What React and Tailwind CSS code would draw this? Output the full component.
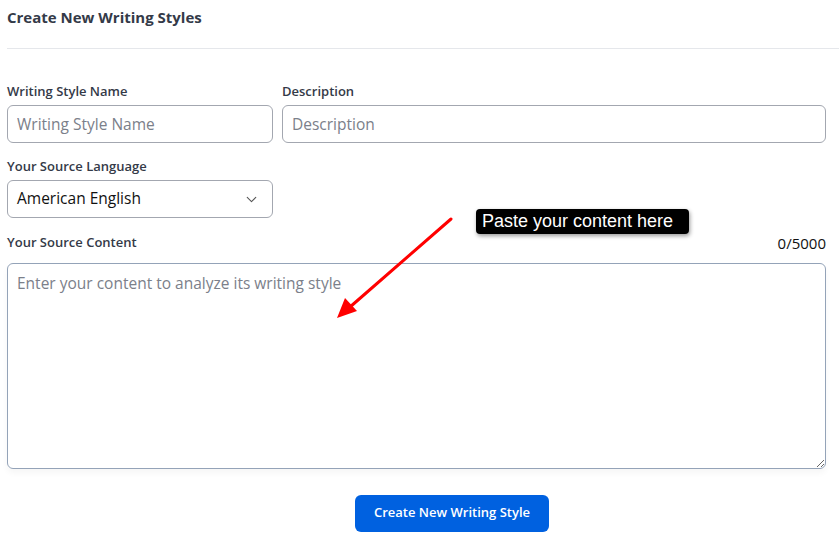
import { ChevronDown } from "lucide-react";

// Writing style creation form with a "paste here" callout.

function Label({ children }) {
  return <p className="text-[13px] font-semibold leading-[18px] text-[#343a48]">{children}</p>;
}

export default function App() {
  return (
    <div className="relative min-h-[542px] w-[839px] bg-white font-['Open_Sans','Noto_Sans',sans-serif] text-[#343a48]">
      <div className="pl-[7px] pt-[7px]">
        <h1 className="text-[15px] font-bold leading-[21px]">Create New Writing Styles</h1>
      </div>
      <div className="ml-[7px] mt-[20px] border-t border-[#e5e7eb]" />

      <div className="pl-[7px] pr-[13px] pt-[33px]">
        <div className="flex gap-[9px]">
          <div className="w-[266px]">
            <Label>Writing Style Name</Label>
            <input
              className="mt-[5px] h-[38px] w-full rounded-md border border-[#a3a7b0] px-[9px] text-[15.5px] text-[#222] outline-none placeholder:text-[#7b808a]"
              placeholder="Writing Style Name"
            />
          </div>
          <div className="flex-1">
            <Label>Description</Label>
            <input
              className="mt-[5px] h-[38px] w-full rounded-md border border-[#a3a7b0] px-[9px] text-[15.5px] text-[#222] outline-none placeholder:text-[#7b808a]"
              placeholder="Description"
            />
          </div>
        </div>

        <div className="mt-[14px] w-[266px]">
          <Label>Your Source Language</Label>
          <div className="mt-[5px] flex h-[38px] w-full items-center justify-between rounded-md border border-[#a3a7b0] pl-[9px] pr-[12px] text-[15.5px] text-[#111]">
            <span>American English</span>
            <ChevronDown size={17} strokeWidth={1.5} className="text-[#555]" />
          </div>
        </div>

        <div className="mt-[14px] flex items-end justify-between">
          <Label>Your Source Content</Label>
          <span className="mb-[-4px] text-[15px] text-[#111]">0/5000</span>
        </div>
        <div className="mt-[12px] rounded-md shadow-[0_4px_6px_rgba(0,0,0,0.04)]">
          <textarea
            className="block h-[206px] w-full resize-y rounded-md border border-[#94a3b8] px-[9px] py-[8px] text-[15.5px] leading-[22px] outline-none placeholder:text-[#7b808a] caret-black"
            placeholder="Enter your content to analyze its writing style"
          />
        </div>

        <div className="mt-[26px] flex justify-center pl-[71px]">
          <button className="h-[37px] w-[194px] rounded-md bg-[#0061e0] text-[13px] font-semibold text-white">
            Create New Writing Style
          </button>
        </div>
      </div>

      {/* callout */}
      <div className="absolute left-[476px] top-[209px] flex h-[25px] w-[213px] items-center rounded-[4px] bg-black pl-[6px] font-['Liberation_Sans',Arial,sans-serif] text-[18px] text-white shadow-[1px_2px_4px_rgba(0,0,0,0.4)]">
        Paste your content here
      </div>
      <svg className="pointer-events-none absolute left-0 top-0" width="839" height="542">
        <line x1="451" y1="219" x2="350" y2="307" stroke="#ff0000" strokeWidth="3" strokeLinecap="round" />
        <polygon points="337,318 345,298 357,311" fill="#ff0000" />
      </svg>
    </div>
  );
}
